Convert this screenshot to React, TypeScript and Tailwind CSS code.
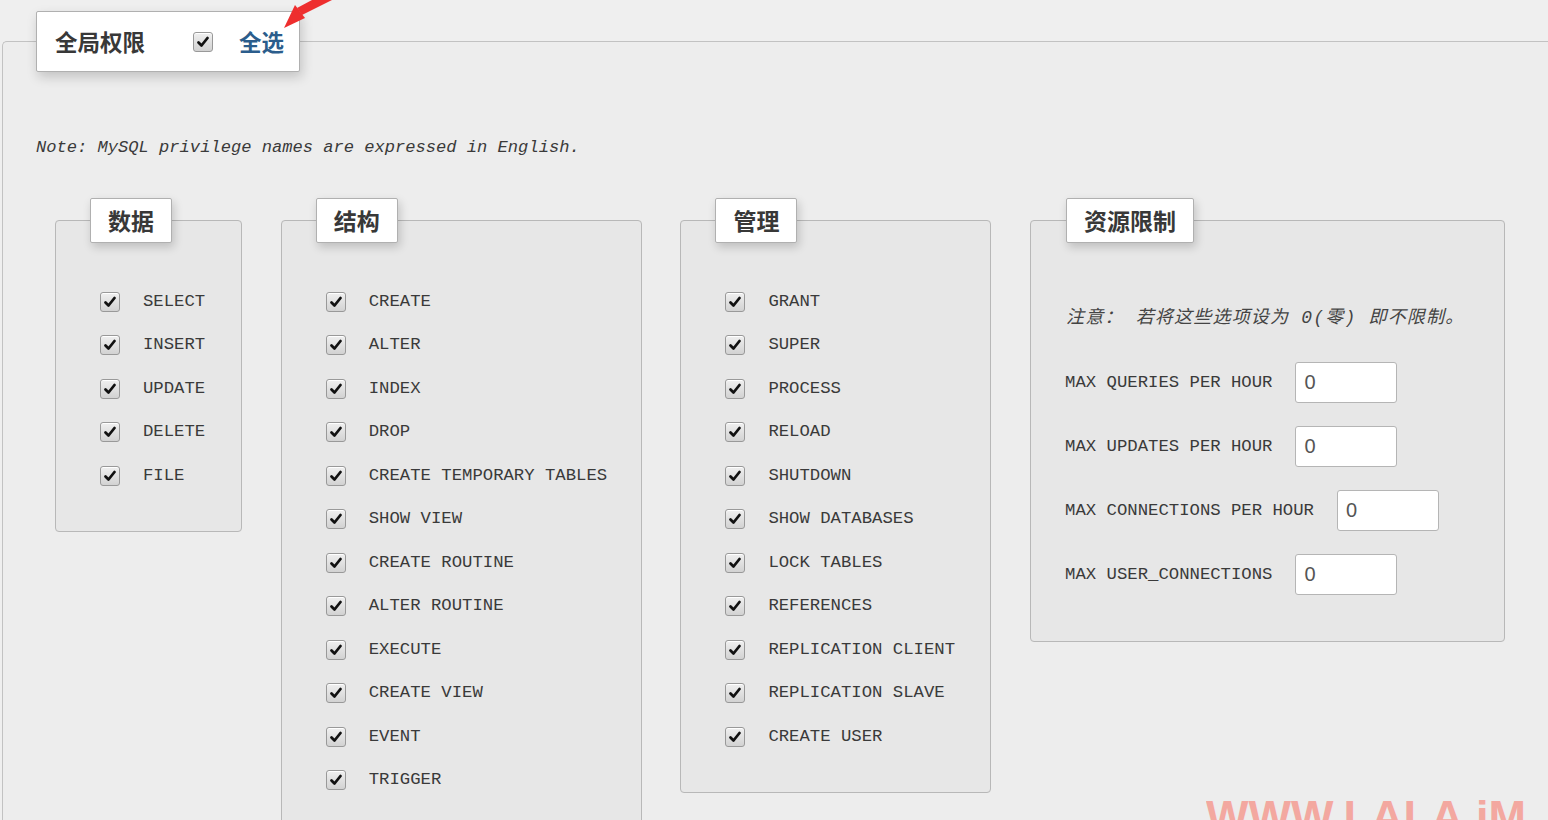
import React from "react";

const mono = "font-['Liberation_Mono','Noto_Sans_CJK_SC',monospace]";
const cjk = "font-['Noto_Sans_CJK_SC','Liberation_Sans',sans-serif]";

const data = ["SELECT", "INSERT", "UPDATE", "DELETE", "FILE"];
const structure = [
  "CREATE",
  "ALTER",
  "INDEX",
  "DROP",
  "CREATE TEMPORARY TABLES",
  "SHOW VIEW",
  "CREATE ROUTINE",
  "ALTER ROUTINE",
  "EXECUTE",
  "CREATE VIEW",
  "EVENT",
  "TRIGGER",
];
const admin = [
  "GRANT",
  "SUPER",
  "PROCESS",
  "RELOAD",
  "SHUTDOWN",
  "SHOW DATABASES",
  "LOCK TABLES",
  "REFERENCES",
  "REPLICATION CLIENT",
  "REPLICATION SLAVE",
  "CREATE USER",
];
const limits = [
  "MAX QUERIES PER HOUR",
  "MAX UPDATES PER HOUR",
  "MAX CONNECTIONS PER HOUR",
  "MAX USER_CONNECTIONS",
];

const Check = () => (
  <span className="flex h-5 w-5 shrink-0 items-center justify-center rounded-[3px] border border-[#999] bg-gradient-to-b from-[#f0f0f0] to-[#d2d2d2] shadow-[inset_0_1px_0_#fff]">
    <svg width="14" height="14" viewBox="0 0 14 14">
      <path d="M2.5 7.5 L5.5 10.5 L11.5 3" fill="none" stroke="#111" strokeWidth="2.8" strokeLinecap="round" strokeLinejoin="round" />
    </svg>
  </span>
);

const Legend = ({ children }: { children: React.ReactNode }) => (
  <legend className="rounded-[2px] border border-[#b0b0b0] bg-white shadow-[2px_4px_10px_rgba(0,0,0,0.18)]">
    <div className={`flex h-[43px] items-center px-[17px] text-[23px] font-bold text-[#383838] ${cjk}`}>{children}</div>
  </legend>
);

const Group = ({ title, items, width }: { title: string; items: string[]; width: string }) => (
  <fieldset className={`${width} shrink-0 rounded-[4px] border border-[#b8b8b8] bg-[#e7e7e7] pl-[34px] pt-[37px] pb-[33px]`}>
    <Legend>{title}</Legend>
    {items.map((item) => (
      <div key={item} className="flex h-[43.5px] items-center pl-[10px]">
        <Check />
        <span className={`ml-[23px] whitespace-nowrap text-[17.3px] text-[#3a3a3a] ${mono}`}>{item}</span>
      </div>
    ))}
  </fieldset>
);

export default function App() {
  return (
    <div className="relative h-[820px] overflow-hidden bg-[#efefef] pl-[2px] pt-[11px]">
      <fieldset className="rounded-tl-[5px] border border-r-0 border-[#c2c2c2] bg-[#ededed] pl-[33px]">
        <legend className="rounded-[2px] border border-[#b0b0b0] bg-white shadow-[2px_5px_12px_rgba(0,0,0,0.18)]">
          <div className={`flex h-[59px] items-center pl-[18px] pr-[15px] text-[22.5px] font-bold ${cjk}`}>
            <span className="text-[#383838]">全局权限</span>
            <span className="ml-[48px]">
              <Check />
            </span>
            <span className="ml-[26px] text-[#2b5d8c]">全选</span>
          </div>
        </legend>

        <p className={`mt-[66px] text-[17.1px] italic leading-[20px] text-[#3a3a3a] ${mono}`}>
          Note: MySQL privilege names are expressed in English.
        </p>

        <div className="ml-[19px] mt-[40px] flex items-start gap-[38.7px]">
          <Group title="数据" items={data} width="w-[187px]" />
          <Group title="结构" items={structure} width="w-[361px]" />
          <Group title="管理" items={admin} width="w-[311px]" />

          <fieldset className="w-[475px] shrink-0 rounded-[4px] border border-[#b8b8b8] bg-[#e7e7e7] pl-[35px] pt-[37px] pb-[46px]">
            <Legend>资源限制</Legend>
            <p className={`mt-[26px] whitespace-nowrap text-[18px] italic leading-[24px] tracking-[1.2px] text-[#444] ${mono}`}>
              注意： 若将这些选项设为 0(零) 即不限制。
            </p>
            <div className="mt-[32px] flex flex-col gap-[23px]">
              {limits.map((label) => (
                <div key={label} className="flex items-center">
                  <span className={`-ml-[1px] whitespace-nowrap text-[17.3px] text-[#3a3a3a] ${mono}`}>{label}</span>
                  <input
                    readOnly
                    value="0"
                    className="ml-[23px] h-[41px] w-[102px] rounded-[3px] border border-[#b5b5b5] bg-white pl-[8px] font-['Liberation_Sans',sans-serif] text-[20px] text-[#555] outline-none"
                  />
                </div>
              ))}
            </div>
          </fieldset>
        </div>
      </fieldset>

      {/* red pointer arrow over the select-all legend */}
      <svg className="absolute left-[278px] top-0" width="80" height="40" viewBox="0 0 80 40">
        <polygon points="6,28 17,5 27,18" fill="#ee2e2e" />
        <polygon points="19,8 24,15 70,-8 64,-16" fill="#ee2e2e" />
      </svg>

      <div className="absolute left-[1206px] top-[794px] whitespace-nowrap font-['Liberation_Sans',sans-serif] text-[45px] font-bold leading-none text-[#f4a198] opacity-90">
        WWW.LALA.iM
      </div>
    </div>
  );
}
